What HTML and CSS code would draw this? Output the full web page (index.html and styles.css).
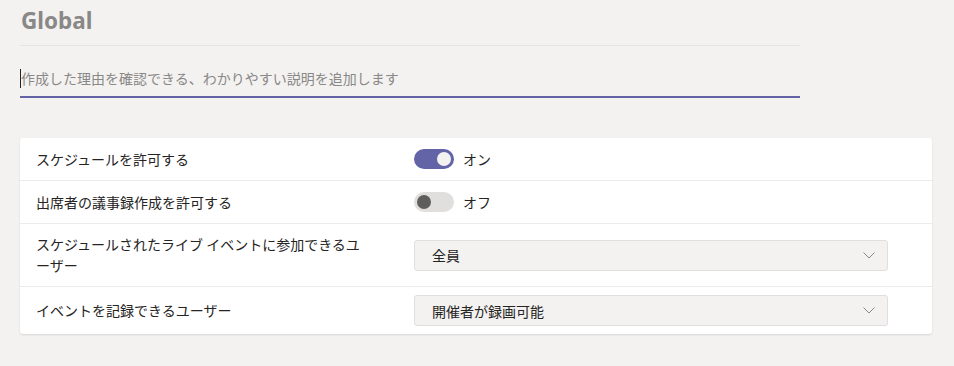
FILE: index.html
```html
<html>
<head>
    <meta http-equiv="Content-Type" content="text/html;charset=utf-8">
    <link rel="stylesheet" href="styles.css">
</head>
<body>
    <div class="policy-head">
        <h1 class="policy-title">Global</h1>
        <div class="desc-field">
            <span class="caret"></span>
            <span class="placeholder">作成した理由を確認できる、わかりやすい説明を追加します</span>
        </div>
    </div>

    <div class="settings-card">
        <div class="setting-row">
            <div class="setting-label">スケジュールを許可する</div>
            <div class="setting-control">
                <span class="toggle on"><span class="knob"></span></span>
                <span class="toggle-text">オン</span>
            </div>
        </div>
        <div class="setting-row">
            <div class="setting-label">出席者の議事録作成を許可する</div>
            <div class="setting-control">
                <span class="toggle"><span class="knob"></span></span>
                <span class="toggle-text">オフ</span>
            </div>
        </div>
        <div class="setting-row">
            <div class="setting-label">スケジュールされたライブ イベントに参加できるユーザー</div>
            <div class="setting-control">
                <div class="dropdown">
                    <span>全員</span>
                    <svg class="chevron" width="12" height="7" viewBox="0 0 12 7"><path d="M0.5 0.5 L6 6 L11.5 0.5" fill="none" stroke="#8a8886" stroke-width="1"/></svg>
                </div>
            </div>
        </div>
        <div class="setting-row">
            <div class="setting-label">イベントを記録できるユーザー</div>
            <div class="setting-control">
                <div class="dropdown">
                    <span>開催者が録画可能</span>
                    <svg class="chevron" width="12" height="7" viewBox="0 0 12 7"><path d="M0.5 0.5 L6 6 L11.5 0.5" fill="none" stroke="#8a8886" stroke-width="1"/></svg>
                </div>
            </div>
        </div>
    </div>
</body>
</html>
```

FILE: styles.css
```css
body {
    font-family: 'Noto Sans', 'Noto Sans CJK JP', sans-serif;
    background-color: #f3f2f1;
    color: #252423;
    margin: 0;
    padding: 0 22px 0 20px;
}

.policy-head {
    width: 780px;
}

.policy-title {
    font-size: 22.5px;
    font-weight: bold;
    color: #8a8886;
    margin: 0;
    padding: 3px 0 0 1px;
    line-height: 36px;
    height: 42px;
    border-bottom: 1px solid #e6e4e2;
}

.desc-field {
    display: flex;
    align-items: center;
    height: 44px;
    margin-top: 6px;
    border-bottom: 2px solid #6264a7;
    font-family: 'Noto Sans CJK JP', sans-serif;
    font-size: 14px;
}

.caret {
    width: 1px;
    height: 19px;
    background: #252423;
    margin-top: 8px;
}

.placeholder {
    color: #8a8886;
    margin-top: 8px;
}

.settings-card {
    margin-top: 40px;
    background: white;
    border-radius: 3px;
    box-shadow: 0 1px 2px rgba(0,0,0,0.12);
}

.setting-row {
    display: grid;
    grid-template-columns: 334px 474px;
    column-gap: 44px;
    align-items: center;
    padding: 8px 16px;
    border-top: 1px solid #edebe9;
}

.setting-row:first-child {
    border-top: none;
}

.setting-label {
    font-family: 'Noto Sans CJK JP', sans-serif;
    font-size: 14px;
    line-height: 21px;
    padding: 2px 0;
}

.setting-control {
    display: flex;
    align-items: center;
    gap: 9px;
    min-height: 26px;
    font-family: 'Noto Sans CJK JP', sans-serif;
    font-size: 14px;
}

.toggle {
    width: 40px;
    height: 20px;
    border-radius: 10px;
    background: #e1dfdd;
    display: flex;
    align-items: center;
    padding: 0 3px;
    box-sizing: border-box;
}

.toggle .knob {
    width: 14px;
    height: 14px;
    border-radius: 50%;
    background: #605e5c;
}

.toggle.on {
    background: #6264a7;
    justify-content: flex-end;
}

.toggle.on .knob {
    background: #f3f2f1;
}

.dropdown {
    width: 474px;
    height: 31px;
    box-sizing: border-box;
    border: 1px solid #e1dfdd;
    border-radius: 3px;
    background: #f3f2f1;
    display: flex;
    align-items: center;
    justify-content: space-between;
    padding: 0 12px 0 17px;
}
```
